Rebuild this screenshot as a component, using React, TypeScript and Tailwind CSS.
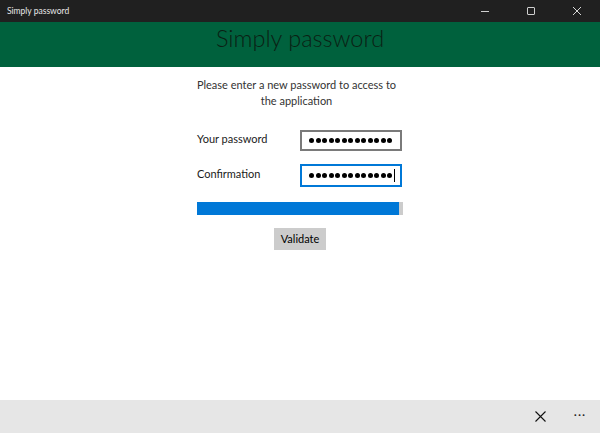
import React from "react";

const Dots = ({ count }: { count: number }) => (
  <div className="flex gap-[1.5px]">
    {Array.from({ length: count }).map((_, i) => (
      <span key={i} className="w-[5px] h-[5px] rounded-full bg-black" />
    ))}
  </div>
);

export default function App() {
  return (
    <div className="w-[600px] h-[433px] flex flex-col bg-white font-['Lato',sans-serif] overflow-hidden">
      {/* window title bar */}
      <div className="h-[22px] bg-[#202020] flex items-center justify-between shrink-0">
        <span className="pl-[7px] text-[8.5px] text-[#e8e8e8]">Simply password</span>
        <div className="flex items-center h-full">
          <div className="w-[46px] h-full flex items-center justify-center">
            <span className="w-[8px] h-px bg-[#cfcfcf]" />
          </div>
          <div className="w-[46px] h-full flex items-center justify-center">
            <span className="w-[8px] h-[8px] border border-[#cfcfcf] rounded-[1px]" />
          </div>
          <div className="w-[46px] h-full flex items-center justify-center">
            <svg width="10" height="10" viewBox="0 0 10 10" stroke="#d8d8d8" strokeWidth="1">
              <path d="M1 1 L9 9 M9 1 L1 9" />
            </svg>
          </div>
        </div>
      </div>

      {/* header */}
      <div className="h-[45px] bg-[#00613d] flex items-center justify-center shrink-0">
        <h1 className="text-[23.5px] font-light text-[#0b1f14] leading-none pb-[12px]">Simply password</h1>
      </div>

      {/* form */}
      <div className="flex-1 flex justify-center">
        <div className="w-[206px] pt-[10px] flex flex-col text-[11px] text-[#1a1a1a]">
          <p className="text-center leading-[16px] text-[#333] -mx-[6px] pr-[7px]">
            Please enter a new password to access to
            <br />
            the application
          </p>

          <div className="mt-[21px] flex items-center">
            <span className="w-[103px] -mt-[3px]">Your password</span>
            <div className="w-[102px] h-[21px] border-2 border-[#7a7a7a] flex items-center pl-[7px]">
              <Dots count={13} />
            </div>
          </div>

          <div className="mt-[13px] flex items-center">
            <span className="w-[103px] -mt-[3px]">Confirmation</span>
            <div className="w-[102px] h-[23px] border-2 border-[#0078d7] flex items-center pl-[7px]">
              <Dots count={13} />
              <span className="ml-[2px] w-px h-[13px] bg-black" />
            </div>
          </div>

          <div className="mt-[15px] h-[13px] w-[206px] bg-[#cccccc] flex">
            <div className="w-[202px] h-full bg-[#0078d7]" />
          </div>

          <div className="mt-[13px] flex justify-center">
            <button className="w-[52px] h-[22px] bg-[#cccccc] text-[11px] text-black">Validate</button>
          </div>
        </div>
      </div>

      {/* app bar */}
      <div className="h-[33px] bg-[#e6e6e6] flex items-center justify-end shrink-0">
        <div className="w-[40px] h-full flex items-center justify-center">
          <svg width="11" height="11" viewBox="0 0 11 11" stroke="#111" strokeWidth="1.1">
            <path d="M0.5 0.5 L10.5 10.5 M10.5 0.5 L0.5 10.5" />
          </svg>
        </div>
        <div className="w-[40px] h-full flex items-center justify-center text-[12px] text-[#222] tracking-[1px] pb-[4px]">
          ···
        </div>
      </div>
    </div>
  );
}
